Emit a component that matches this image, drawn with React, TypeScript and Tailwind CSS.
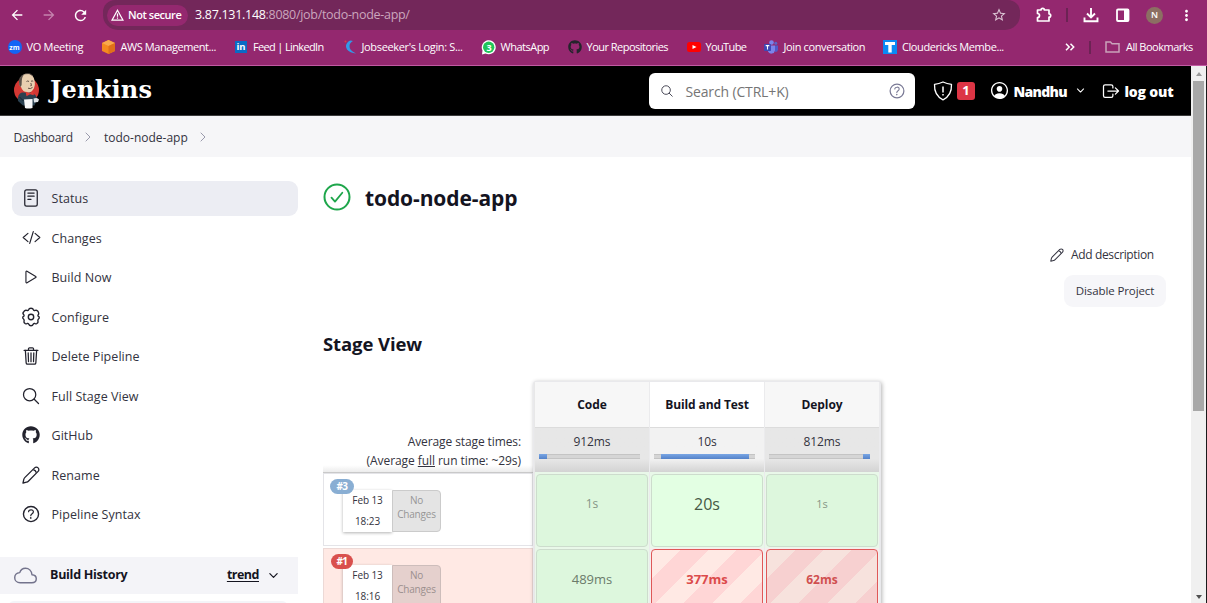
import type { ReactNode } from 'react';
import {
  IoReaderOutline,
  IoCodeSlashOutline,
  IoPlayOutline,
  IoSearchOutline,
  IoTrashOutline,
  IoHelpCircleOutline,
  IoCloudOutline,
  IoChevronDownOutline,
  IoPersonCircleOutline,
  IoLogOutOutline,
} from 'react-icons/io5';
import { FaGithub } from 'react-icons/fa';
import { MdArrowBack, MdArrowForward, MdRefresh, MdStarOutline, MdMoreVert } from 'react-icons/md';

function Pencil({ className }: { className: string }) {
  return (
    <svg viewBox="0 0 18 18" className={className} fill="none" stroke="currentColor" strokeWidth="1.3" strokeLinejoin="round">
      <path d="M1 17l.8-3.600Q2 12.400 3 11.400L12.600 1.900a2.400 2.400 0 0 1 3.500 3.500L6.600 15Q5.600 16 4.600 16.200z" />
      <path d="M11.300 3.800q2.500.2 2.900 2.900" />
    </svg>
  );
}

function Gear() {
  return (
    <svg viewBox="0 0 20 20" className="size-[20px]" fill="none" stroke="currentColor" strokeWidth="1.4" strokeLinejoin="round">
      <path d="M7.6 2.7Q8 1.2 10 1.2t2.4 1.5q.5 1.2 1.8.7 1.7-.7 2.8 1t.6 2.8q-1 1-.6 1.7l1.2 1.1q.5 1.1-.9 2.3-.8.7-.3 1.9.4 1.6-1.3 2.4-1.3.5-2-.1-1.1-.4-1.5.8-.5 1.5-2.2 1.5t-2.2-1.5q-.4-1.2-1.5-.8-.7.6-2 .1-1.700-.8-1.300-2.400.5-1.200-.300-1.900Q1.300 11.100 1.800 10L3 8.900q.4-.7-.6-1.700-1.100-1.100.6-2.800 1.100-1.700 2.800-1 1.300.5 1.800-.7z" />
      <circle cx="10" cy="10" r="2.7" />
    </svg>
  );
}

function JenkinsLogo() {
  return (
    <svg viewBox="0 0 26 36" className="h-[36px] w-[26px]">
      <ellipse cx="12.500" cy="17" rx="12.500" ry="12.500" fill="#d33833" />
      <path d="M4 28Q3 21 8 19.500l9 0q6 2 6 7l-2.500 6H9z" fill="#2b4150" />
      <path d="M5.500 8Q6.500 1 13 .8q7 0 7.800 8 .5 4-.8 6.500Q18 19.500 14 19.500 8.500 19 7 14 4.500 12 5.500 8z" fill="#e8cfb0" />
      <path d="M5.300 12Q3.500 3 11 .8q-3 2.200-3.200 7L7.600 12l-1 2z" fill="#5b5149" />
      <path d="M11 .8q5-1.500 8 2" stroke="#5b5149" strokeWidth=".8" fill="none" />
      <path d="M12.500 8.500q1.200-1 2.500 0M17 8.300q1.200-.8 2.200 0M14 15.200q2.500 1.200 4.500-.8M16.800 10l.7 2.500-1.200.3" stroke="#51423a" strokeWidth=".9" fill="none" />
      <path d="M11.500 18.500l4 1.700 4-2.200.3 4.200-3.800-1-3.500 2z" fill="#e03a35" />
      <path d="M10 26.500l8.500-.5v9Q14 36 11 35z" fill="#f8f8f8" />
      <path d="M19.500 25.500q4-1.500 5.500 1l-1 2.500-4 .5z" fill="#dfe3e6" />
      <path d="M5.500 24l4 4" stroke="#0e1e28" strokeWidth=".8" />
    </svg>
  );
}

function Bookmark({ width, gap, icon, label, tracking }: { width: string; gap: string; icon: ReactNode; label: string; tracking: string }) {
  return (
    <div className={`flex h-full shrink-0 items-center whitespace-nowrap ${width} ${gap}`}>
      <span className="flex shrink-0 items-center">{icon}</span>
      <span className={tracking}>{label}</span>
    </div>
  );
}

function BrowserBar() {
  return (
    <div className="flex h-[66px] flex-col border-b border-[#c25aa3] bg-[#94286f] text-white">
      <div className="flex h-[30px] items-center">
        <MdArrowBack className="ml-[9px] size-[16px]" />
        <MdArrowForward className="ml-[16px] size-[16px] text-[#c583ae]" />
        <MdRefresh className="ml-[15px] size-[17px]" />
        <div className="ml-[14px] flex h-[30px] w-[917px] items-center rounded-b-[15px] rounded-t-[12px] bg-[#73275a]">
          <div className="ml-[4px] flex h-[21px] w-[81px] shrink-0 items-center rounded-full bg-[#94286f] pl-[4px] text-[11px] font-semibold">
            <svg viewBox="0 0 13 12" className="h-[12px] w-[13px]" fill="none" stroke="white" strokeWidth="1.200">
              <path d="M6.500 1.200l5.500 9.900H1z" />
              <path d="M6.500 4.600v3.200M6.500 8.600v1.200" />
            </svg>
            <span className="ml-[4px] whitespace-nowrap tracking-[-0.45px]">Not secure</span>
          </div>
          <span className="ml-[7px] whitespace-nowrap text-[12.500px] tracking-[-0.3px]">
            3.87.131.148<span className="text-[#cba6bd]">:8080/job/todo-node-app/</span>
          </span>
          <MdStarOutline className="ml-auto mr-[13px] size-[16px] text-[#dcc5d4]" />
        </div>
        <svg viewBox="0 0 16 16" className="ml-[16px] size-[16px]" fill="none" stroke="white" strokeWidth="1.700" strokeLinejoin="round">
          <path d="M1.500 3H5a1.700 1.700 0 0 1 3.400 0H13v3.800a1.700 1.700 0 0 1 0 3.400V14H1.500v-3.500a2 2 0 0 0 0-4z" />
        </svg>
        <div className="ml-[14px] h-[14px] w-[2px] bg-[#6c2354]" />
        <svg viewBox="0 0 16 16" className="ml-[15px] size-[16px]" fill="none" stroke="white" strokeWidth="1.900">
          <path d="M8 1v9M4 6.500l4 4 4-4M1.500 10.500v3.700h13v-3.700" />
        </svg>
        <svg viewBox="0 0 14 14" className="ml-[17px] size-[14px]">
          <rect x="1" y="1.500" width="11.500" height="11.500" rx="1" fill="none" stroke="white" strokeWidth="1.800" />
          <path d="M8 1.500h4.500V13H8z" fill="white" />
        </svg>
        <div className="ml-[16px] flex size-[17px] items-center justify-center rounded-full bg-[#8c6f63] text-[9px] font-semibold">N</div>
        <MdMoreVert className="ml-[15px] size-[17px]" />
      </div>
      <div className="flex h-[34px] items-center pl-[7.500px] text-[11px] font-medium">
        <Bookmark width="w-[94px]" gap="gap-[5px]" tracking="tracking-[-0.3px]" label="VO Meeting"
          icon={<span className="flex size-[14px] items-center justify-center rounded-full bg-[#1464f6] text-[7px] font-bold leading-none">zm</span>} />
        <Bookmark width="w-[133.500px]" gap="gap-[6px]" tracking="tracking-[-0.43px]" label="AWS Management..."
          icon={<svg viewBox="0 0 13 14" className="h-[14px] w-[13px]"><path d="M6.500 0L13 3v8l-6.500 3L0 11V3z" fill="#f58a1f" /><path d="M0 3l6.500 3L13 3 6.500 0z" fill="#f9a94d" /><path d="M6.500 6v8L13 11V3z" fill="#e0701a" /></svg>} />
        <Bookmark width="w-[108.500px]" gap="gap-[6px]" tracking="tracking-[-0.65px]" label="Feed | LinkedIn"
          icon={<span className="flex size-[12px] items-center justify-center bg-[#0a6bc5] text-[9.500px] font-bold leading-none">in</span>} />
        <Bookmark width="w-[137px]" gap="gap-[5px]" tracking="tracking-[-0.35px]" label="Jobseeker's Login: S..."
          icon={<svg viewBox="0 0 13 14" className="h-[14px] w-[13px]"><path d="M5 1Q0 5 3 9.500 6 13 12 13.500 5 10 5.500 6 5.500 3 9 1 6.500 0 5 1z" fill="#3399e8" /><circle cx="1.500" cy="1.500" r="1" fill="#e33a3e" /></svg>} />
        <Bookmark width="w-[87px]" gap="gap-[5px]" tracking="tracking-[-0.5px]" label="WhatsApp"
          icon={<svg viewBox="0 0 15 15" className="size-[15px]"><path d="M1 14.500l.5-4A7 7 0 1 1 4.500 13.500z" fill="white" /><circle cx="7.700" cy="7.300" r="5.700" fill="#20c45a" /><text x="5.400" y="10.700" fontSize="9" fontWeight="700" fill="white">3</text></svg>} />
        <Bookmark width="w-[119px]" gap="gap-[5px]" tracking="tracking-[-0.52px]" label="Your Repositories"
          icon={<FaGithub className="size-[14px] text-[#24242c]" />} />
        <Bookmark width="w-[77.500px]" gap="gap-[5px]" tracking="tracking-[-0.63px]" label="YouTube"
          icon={<svg viewBox="0 0 14 10" className="h-[10px] w-[14px]"><rect width="14" height="10" rx="2.500" fill="#ff0000" /><path d="M5.500 3v4L9.500 5z" fill="white" /></svg>} />
        <Bookmark width="w-[118.500px]" gap="gap-[5.500px]" tracking="tracking-[-0.38px]" label="Join conversation"
          icon={<svg viewBox="0 0 14 14" className="size-[14px]"><circle cx="7.500" cy="2.500" r="2.300" fill="#7b83eb" /><circle cx="11.800" cy="3.300" r="1.500" fill="#5b64c8" /><path d="M4 5.500h7v5a3.700 3.700 0 0 1-7 1z" fill="#7b83eb" /><path d="M11 5.500h3v4a2.500 2.500 0 0 1-3 2.300z" fill="#5059c9" /><rect y="4" width="7" height="7" rx=".7" fill="#3f48b5" /><path d="M1.700 5.600h3.600M3.500 5.600v4" stroke="white" strokeWidth="1.100" /></svg>} />
        <Bookmark width="w-[170.500px]" gap="gap-[5.500px]" tracking="tracking-[-0.42px]" label="Cloudericks Membe..."
          icon={<svg viewBox="0 0 14 14" className="size-[14px]"><rect width="14" height="14" fill="#0a8af5" /><path d="M2 2h10v3H8.700v7.500H5.300V5H2z" fill="white" /></svg>} />
        <svg viewBox="0 0 10 8" className="ml-[12px] h-[8px] w-[10px]" fill="none" stroke="white" strokeWidth="1.500"><path d="M1 .8L4.200 4 1 7.200M5.500 .8L8.700 4 5.500 7.200" /></svg>
        <div className="ml-[14px] h-[13px] w-[2px] bg-[#6c2354]" />
        <svg viewBox="0 0 15 12" className="ml-[14px] h-[12px] w-[15px]" fill="none" stroke="#c9a3bb" strokeWidth="1.500"><path d="M1 1h4.500l1.500 1.700h7V11H1z" /></svg>
        <span className="ml-[6px] whitespace-nowrap tracking-[-0.5px]">All Bookmarks</span>
      </div>
    </div>
  );
}

function Header() {
  return (
    <header className="flex h-[50px] shrink-0 items-center border-b border-[#3c3c3c] bg-black text-white">
      <div className="ml-[14px]"><JenkinsLogo /></div>
      <span className="ml-[10px] w-[104px] whitespace-nowrap pb-[2px] font-['DejaVu_Serif','Liberation_Serif',serif] text-[24px] font-bold leading-none tracking-[0.2px]">Jenkins</span>
      <div className="ml-auto flex h-[36px] w-[266px] items-center rounded-[6px] bg-white">
        <IoSearchOutline className="ml-[11px] size-[14px] text-[#333344]" />
        <span className="ml-[11.500px] pt-[1px] text-[14px] tracking-[-0.15px] text-[#757575]">Search (CTRL+K)</span>
        <IoHelpCircleOutline className="ml-auto mr-[8px] size-[20px] text-[#7a7a96]" />
      </div>
      <svg viewBox="0 0 20 20" className="ml-[18px] size-[20px]" fill="none" stroke="white" strokeWidth="1.300" strokeLinejoin="round">
        <path d="M10 1Q6 3 1.500 3.300 1 14.500 10 18.800 19 14.500 18.500 3.300 14 3 10 1z" />
        <path d="M10 5.500v6M10 13v1.500" strokeWidth="1.500" />
      </svg>
      <span className="ml-[4px] flex h-[18px] w-[18px] items-center justify-center rounded-[3px] bg-[#dc3545] text-[13px] font-bold">1</span>
      <IoPersonCircleOutline className="ml-[14px] size-[21px]" />
      <span className="ml-[3.500px] w-[54px] whitespace-nowrap pt-[1px] text-[14px] font-extrabold tracking-[-0.7px]">Nandhu</span>
      <IoChevronDownOutline className="ml-[7px] size-[11px]" />
      <IoLogOutOutline className="ml-[15px] size-[20px]" />
      <span className="ml-[4px] mr-[16.500px] w-[50px] whitespace-nowrap pt-[1px] text-[14px] font-extrabold tracking-[-0.2px]">log out</span>
    </header>
  );
}

function Crumb() {
  return (
    <svg viewBox="0 0 6 10" className="h-[10px] w-[6px]" fill="none" stroke="#9a9aac" strokeWidth="1"><path d="M.7 .7L5 5 .7 9.300" /></svg>
  );
}

const TASKS: { label: string; icon: ReactNode }[] = [
  { label: 'Status', icon: <IoReaderOutline className="size-[20px]" /> },
  { label: 'Changes', icon: <IoCodeSlashOutline className="size-[19px]" /> },
  { label: 'Build Now', icon: <IoPlayOutline className="size-[18px]" /> },
  { label: 'Configure', icon: <Gear /> },
  { label: 'Delete Pipeline', icon: <IoTrashOutline className="size-[20px]" /> },
  { label: 'Full Stage View', icon: <IoSearchOutline className="size-[20px]" /> },
  { label: 'GitHub', icon: <FaGithub className="size-[18px]" /> },
  { label: 'Rename', icon: <Pencil className="size-[18px]" /> },
  { label: 'Pipeline Syntax', icon: <IoHelpCircleOutline className="size-[22px]" /> },
];

function Sidebar() {
  return (
    <aside className="flex w-[298px] shrink-0 flex-col pt-[24px]">
      <nav className="flex flex-col gap-[5px] pl-[12px]">
        {TASKS.map((task, i) => (
          <a key={task.label} className={`flex h-[34.500px] items-center rounded-[9px] text-[12.500px] font-medium tracking-[0.05px] text-[#333340] ${i === 0 ? 'bg-[#ecedf3]' : ''}`}>
            <span className="flex w-[38px] shrink-0 justify-center text-[#22222d]">{task.icon}</span>
            <span className="ml-[1.500px] pt-[3px]">{task.label}</span>
          </a>
        ))}
      </nav>
      <div className="mt-[25px] flex h-[37px] shrink-0 items-center bg-[#f4f4f8] text-[12.500px] font-bold text-[#14141f]">
        <IoCloudOutline className="ml-[14px] size-[23px] text-[#73738c]" />
        <span className="ml-[13px] tracking-[-0.27px]">Build History</span>
        <span className="ml-auto mr-[8px] tracking-[-0.5px] underline decoration-1 underline-offset-[2px]">trend</span>
        <IoChevronDownOutline className="mr-[18px] size-[13px]" />
      </div>
      <div className="ml-[8px] mr-[10px] mt-[7px] h-[12px] shrink-0 rounded-[6px] bg-[#f4f4f8]" />
    </aside>
  );
}

function TimeBar({ lead, fill, tail }: { lead: string; fill: string; tail: string }) {
  return (
    <div className="mr-[5px] mt-[3px] flex h-[5px] w-[101px] bg-[#d5d5d5]">
      <div className={`h-full border-y border-[#c4c4c4] ${lead}`} />
      <div className={`h-full bg-gradient-to-b from-[#79a6e4] to-[#5482c9] ${fill}`} />
      <div className={`h-full border-y border-[#c4c4c4] ${tail}`} />
    </div>
  );
}

function BuildInfo({ badge, color, time, failed }: { badge: string; color: string; time: string; failed: boolean }) {
  return (
    <div className={`h-[73px] border pl-[19px] pt-[16px] ${failed ? 'border-[#ecd9d6] bg-[#ffe9e4]' : 'border-[#e4e4e8] bg-white'}`}>
      <div className="relative flex w-[98px]">
        <div className="flex h-[42px] w-[49px] flex-col justify-between bg-white py-[2px] text-center text-[10px] leading-[17px] tracking-[-0.1px] text-[#333340] shadow-[0_1px_3px_rgba(0,0,0,0.3)]">
          <span>Feb 13</span>
          <span>{time}</span>
        </div>
        <div className={`h-[42px] w-[49px] rounded-r-[4px] border pt-[2px] text-center text-[10px] leading-[14px] tracking-[-0.2px] ${failed ? 'border-[#cdbdbb] bg-[#e5d0cd] text-[#9b8f8e]' : 'border-[#cbcbcb] bg-[#e4e4e4] text-[#969696]'}`}>
          No<br />Changes
        </div>
        <span className={`absolute -top-[11px] flex h-[15px] items-center justify-center rounded-full text-[10px] font-bold tracking-[-0.5px] text-white ${color}`}>{badge}</span>
      </div>
    </div>
  );
}

function StageView() {
  return (
    <div className="flex w-[559px]">
      <div className="w-[210px] shrink-0 pt-[46px]">
        <div className="flex h-[46px] flex-col items-end bg-gradient-to-b from-white from-85% to-[#ececec] border-b border-[#c9c9c9] pr-[12px] pt-[5px] text-[12px] leading-[19px] text-[#333340]">
          <span className="whitespace-nowrap tracking-[-0.1px]">Average stage times:</span>
          <span className="whitespace-nowrap tracking-[-0.07px]">(Average <u>full</u> run time: ~29s)</span>
        </div>
        <BuildInfo badge="#3" color="-left-[13px] w-[24px] bg-[#89aed3]" time="18:23" failed={false} />
        <div className="h-[2px]" />
        <BuildInfo badge="#1" color="-left-[12px] w-[22px] bg-[#d9504d]" time="18:16" failed />
      </div>
      <div className="grid w-[348px] shrink-0 grid-cols-[116px_115px_115px] rounded-t-[3px] border border-[#e9e9ec] bg-[#e8e8e8] shadow-[1px_1px_4px_rgba(0,0,0,0.3)]">
        {[
          { name: 'Code', avg: '912ms', lead: 'w-0', fill: 'w-[8px]', tail: 'grow', first: '1s', second: '489ms', hot: false, ft: 'text-[12px] text-[#869586]', st: 'text-[13px] text-[#6b7b6b]' },
          { name: 'Build and Test', avg: '10s', lead: 'w-[7px]', fill: 'w-[88px]', tail: 'grow', first: '20s', second: '377ms', hot: true, ft: 'text-[16px] text-[#465946]', st: 'text-[13px] font-bold text-[#dc4b4b]' },
          { name: 'Deploy', avg: '812ms', lead: 'grow', fill: 'w-[7px]', tail: 'w-0', first: '1s', second: '62ms', hot: false, ft: 'text-[11px] text-[#869586]', st: 'text-[12px] font-bold text-[#d05050]' },
        ].map((s, i) => (
          <div key={s.name} className={`flex flex-col border-r border-[#ebebed] ${i === 0 ? 'pl-px' : ''}`}>
            <div className={`flex h-[45px] items-center justify-center whitespace-nowrap text-[12px] font-bold tracking-[-0.1px] text-[#14141f] ${s.hot ? 'bg-white' : 'bg-[#f7f7f7]'}`}>{s.name}</div>
            <div className={`flex h-[45px] flex-col items-center border-t border-t-[#dcdcdc] bg-gradient-to-b from-70% to-[#d3d3d3] pt-[4px] text-[12px] leading-[19px] tracking-[-0.1px] text-[#333340] ${s.hot ? 'from-[#f2f2f2]' : 'from-[#e7e7e7]'}`}>
              {s.avg}
              <TimeBar lead={s.lead} fill={s.fill} tail={s.tail} />
            </div>
            <div className="h-[76px] bg-[#e9f8e9] px-[1px] pb-[1px] pt-[2px]">
              <div className={`flex h-full items-center justify-center rounded-[4px] border border-[#cddccd] pb-[13px] ${s.hot ? 'bg-[#e3ffe3]' : 'bg-[#ddf7dd]'} ${s.ft}`}>{s.first}</div>
            </div>
            <div className={`h-[76px] px-[1px] pt-[1px] ${i === 0 ? 'bg-[#e9f8e9]' : 'bg-[#f6eeee]'}`}>
              <div className={`flex h-full items-center justify-center rounded-[4px] border pb-[14px] ${s.st} ${
                i === 0
                  ? 'border-[#cddccd] bg-[#ddf7dd]'
                  : i === 1
                    ? 'border-[#df5858] bg-[repeating-linear-gradient(135deg,#ffe9e4_0,#ffe9e4_20px,#ffd6d6_20px,#ffd6d6_40px)]'
                    : 'border-[#df5858] bg-[repeating-linear-gradient(135deg,#f7e2dd_0,#f7e2dd_20px,#f7d0d0_20px,#f7d0d0_40px)]'
              }`}>{s.second}</div>
            </div>
          </div>
        ))}
      </div>
    </div>
  );
}

export default function App() {
  return (
    <div className="flex h-[603px] w-[1207px] flex-col overflow-hidden bg-white font-['Open_Sans','Noto_Sans',sans-serif]">
      <BrowserBar />
      <div className="flex h-[537px]">
        <div className="flex w-[1191px] shrink-0 flex-col overflow-hidden">
          <Header />
          <div className="flex h-[41px] shrink-0 items-center bg-[#f6f6f8] pl-[13.500px] text-[12px] font-medium text-[#333340]">
            <span className="w-[71.500px] whitespace-nowrap pt-[2px] tracking-[-0.3px]">Dashboard</span>
            <Crumb />
            <span className="ml-[13px] w-[96px] whitespace-nowrap pt-[2px]">todo-node-app</span>
            <Crumb />
          </div>
          <div className="flex min-h-0 flex-1">
            <Sidebar />
            <main className="flex flex-1 flex-col pl-[25px]">
              <div className="mt-[26px] flex h-[28px] items-center">
                <svg viewBox="0 0 28 28" className="size-[28px]" fill="none" stroke="#1ea64b" strokeWidth="2">
                  <circle cx="14" cy="14" r="12.500" />
                  <path d="M8.500 14.600l3.500 4L19.300 9.800" strokeWidth="1.800" strokeLinecap="round" strokeLinejoin="round" />
                </svg>
                <h1 className="ml-[14px] pt-[2px] text-[21px] font-bold leading-none tracking-[-0.1px] text-[#14141f]">todo-node-app</h1>
              </div>
              <div className="mt-[35px] flex h-[26px] items-center justify-end pr-[37px] text-[12px] font-medium text-[#333340]">
                <Pencil className="size-[14px]" />
                <span className="ml-[7px] w-[83px] whitespace-nowrap tracking-[-0.35px]">Add description</span>
              </div>
              <div className="mt-[11px] flex justify-end pr-[25px]">
                <button className="h-[32px] w-[102px] whitespace-nowrap rounded-[9px] bg-[#f6f6f9] text-[11.500px] font-medium tracking-[-0.1px] text-[#333340]">Disable Project</button>
              </div>
              <h2 className="mt-[23px] h-[28px] text-[18.500px] font-bold leading-[28px] tracking-[-0.1px] text-[#14141f]">Stage View</h2>
              <div className="mt-[23px]"><StageView /></div>
            </main>
          </div>
        </div>
        <div className="flex w-[15px] flex-col items-center justify-between bg-[#f0f0f0] pb-[4px] pt-[6px]">
          <div className="flex flex-col items-center">
            <svg viewBox="0 0 6 4" className="h-[4px] w-[6px]"><path d="M3 0l3 4H0z" fill="#9a9a9a" /></svg>
            <div className="mt-[5px] h-[330px] w-[11px] bg-[#a8a8a8]" />
          </div>
          <svg viewBox="0 0 6 4" className="h-[4px] w-[6px]"><path d="M3 4l3-4H0z" fill="#505050" /></svg>
        </div>
        <div className="w-px bg-[#1a1a1a]" />
      </div>
    </div>
  );
}
